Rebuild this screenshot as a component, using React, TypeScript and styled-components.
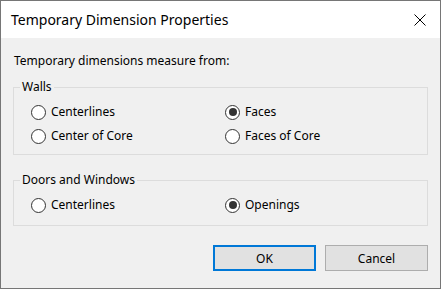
import React from "react";
import styled, { createGlobalStyle } from "styled-components";

const Global = createGlobalStyle`
  html, body { margin: 0; padding: 0; background: #f0f0f0; }
  * { box-sizing: border-box; }
`;

const Window = styled.div`
  width: 441px;
  height: 289px;
  border: 1px solid #767676;
  background: #f0f0f0;
  display: flex;
  flex-direction: column;
  font-family: "Noto Sans", "Open Sans", sans-serif;
  color: #000;
`;

const TitleBar = styled.div`
  height: 37px;
  background: #fff;
  display: flex;
  align-items: center;
  justify-content: space-between;
  padding: 0 14px 0 10px;
  flex-shrink: 0;
`;

const Title = styled.span`
  font-size: 14px;
  line-height: 20px;
  padding-top: 1px;
`;

const CloseIcon = styled.svg`
  width: 12px;
  height: 12px;
  display: block;
`;

const Body = styled.div`
  padding: 15px 12px 0 12px;
  display: flex;
  flex-direction: column;
  font-size: 12px;
  line-height: 16px;
`;

const Intro = styled.div`
  padding-left: 1px;
`;

const Group = styled.fieldset<{ $top: number; $pt: number; $pb: number }>`
  margin: ${(p) => p.$top}px 0 0 0;
  padding: ${(p) => p.$pt}px 0 ${(p) => p.$pb}px 0;
  border: 1px solid #dcdcdc;
  min-width: 0;
`;

const Legend = styled.legend`
  margin-left: 6px;
  padding: 0 2px;
  font-size: 12px;
  line-height: 16px;
`;

const Grid = styled.div`
  display: grid;
  grid-template-columns: 194px 1fr;
  padding-left: 17px;
`;

const Option = styled.label`
  display: flex;
  align-items: center;
  height: 24px;
  gap: 5px;
`;

const Circle = styled.span<{ $checked?: boolean }>`
  width: 15px;
  height: 15px;
  border-radius: 50%;
  border: 1px solid #333;
  background: #fff;
  display: flex;
  align-items: center;
  justify-content: center;
  flex-shrink: 0;
  &::after {
    content: "";
    width: 8px;
    height: 8px;
    border-radius: 50%;
    background: ${(p) => (p.$checked ? "#333" : "transparent")};
  }
`;

const Buttons = styled.div`
  display: flex;
  justify-content: flex-end;
  gap: 9px;
  margin-top: 19px;
`;

const Button = styled.button<{ $primary?: boolean }>`
  width: 103px;
  height: 26px;
  background: #e1e1e1;
  border: ${(p) => (p.$primary ? "2px solid #0078d7" : "1px solid #adadad")};
  font-family: inherit;
  font-size: 12px;
  color: #000;
  padding: 0;
`;

const Radio = ({ label, checked }: { label: string; checked?: boolean }) => (
  <Option>
    <Circle $checked={checked} />
    <span>{label}</span>
  </Option>
);

export default function App() {
  return (
    <>
      <Global />
      <Window>
        <TitleBar>
          <Title>Temporary Dimension Properties</Title>
          <CloseIcon viewBox="0 0 12 12">
            <path d="M0.5 0.5 L11.5 11.5 M11.5 0.5 L0.5 11.5" stroke="#000" strokeWidth="1" fill="none" />
          </CloseIcon>
        </TitleBar>
        <Body>
          <Intro>Temporary dimensions measure from:</Intro>
          <Group $top={10} $pt={5} $pb={6}>
            <Legend>Walls</Legend>
            <Grid>
              <Radio label="Centerlines" />
              <Radio label="Faces" checked />
              <Radio label="Center of Core" />
              <Radio label="Faces of Core" />
            </Grid>
          </Group>
          <Group $top={17} $pt={5} $pb={8}>
            <Legend>Doors and Windows</Legend>
            <Grid>
              <Radio label="Centerlines" />
              <Radio label="Openings" checked />
            </Grid>
          </Group>
          <Buttons>
            <Button $primary>OK</Button>
            <Button>Cancel</Button>
          </Buttons>
        </Body>
      </Window>
    </>
  );
}
